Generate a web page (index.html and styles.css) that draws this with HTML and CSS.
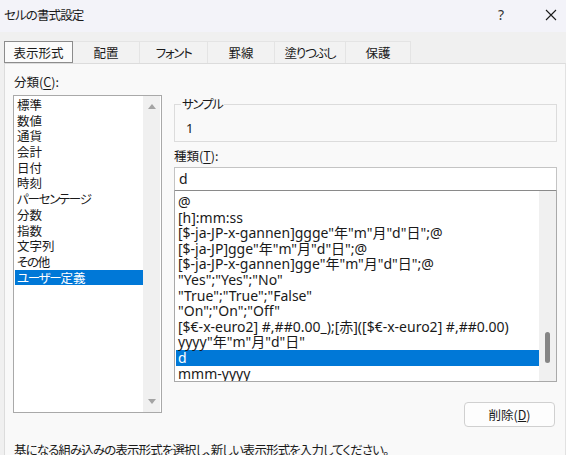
FILE: index.html
```html
<!DOCTYPE html>
<html lang="ja">
<head>
<meta charset="utf-8">
<title>セルの書式設定</title>
<link rel="stylesheet" href="styles.css">
</head>
<body>
<div class="window">
  <header class="titlebar">
    <span class="title">セルの書式設定</span>
    <div class="controls">
      <span class="help">?</span>
      <span class="close"><svg width="12" height="12" viewBox="0 0 12 12"><path d="M1 1L11 11M11 1L1 11" stroke="#1a1a1a" stroke-width="1.1" fill="none"/></svg></span>
    </div>
  </header>
  <nav class="tabs">
    <div class="tab active t1">表示形式</div>
    <div class="tab t2">配置</div>
    <div class="tab t3"><span class="kana">フォント</span></div>
    <div class="tab t4">罫線</div>
    <div class="tab t5"><span class="kana">塗りつぶし</span></div>
    <div class="tab t6">保護</div>
  </nav>
  <section class="panel">
    <div class="columns">
      <div class="left">
        <div class="label first">分類(<u>C</u>):</div>
        <div class="catlist">
          <ul class="cat-items">
            <li>標準</li>
            <li>数値</li>
            <li>通貨</li>
            <li>会計</li>
            <li>日付</li>
            <li>時刻</li>
            <li><span class="kana">パーセンテージ</span></li>
            <li>分数</li>
            <li>指数</li>
            <li>文字列</li>
            <li><span class="kana">その</span>他</li>
            <li class="sel"><span class="kana">ユーザー</span>定義</li>
          </ul>
          <div class="vscroll">
            <span class="arrow up"></span>
            <span class="arrow down"></span>
          </div>
        </div>
      </div>
      <div class="right">
        <fieldset class="sample">
          <legend><span class="kana">サンプル</span></legend>
          <div class="sample-value">1</div>
        </fieldset>
        <div class="label">種類(<u>T</u>):</div>
        <div class="input">d</div>
        <div class="fmtlist">
          <ul class="fmt-items">
            <li>@</li>
            <li>[h]:mm:ss</li>
            <li>[$-ja-JP-x-gannen]ggge"年"m"月"d"日";@</li>
            <li>[$-ja-JP]gge"年"m"月"d"日";@</li>
            <li>[$-ja-JP-x-gannen]gge"年"m"月"d"日";@</li>
            <li>"Yes";"Yes";"No"</li>
            <li>"True";"True";"False"</li>
            <li>"On";"On";"Off"</li>
            <li>[$€-x-euro2] #,##0.00_);[赤]([$€-x-euro2] #,##0.00)</li>
            <li>yyyy"年"m"月"d"日"</li>
            <li class="sel">d</li>
            <li>mmm-yyyy</li>
          </ul>
          <div class="vscroll2">
            <span class="thumb" style="margin-top:141px"></span>
          </div>
        </div>
        <div class="btnrow">
          <button class="btn">削除(<u>D</u>)</button>
        </div>
      </div>
    </div>
    <p class="hint">基になる組み込みの表示形式を選択し、新しい表示形式を入力してください。</p>
  </section>
</div>
</body>
</html>
```

FILE: styles.css
```css
* { box-sizing: border-box; }
html, body {
  margin: 0;
  padding: 0;
  width: 566px;
  height: 455px;
  overflow: hidden;
  background: #f0f0f0;
}
body {
  font-family: "Noto Sans CJK JP", "Noto Sans", sans-serif;
  font-feature-settings: "palt";
  color: #1a1a1a;
  font-size: 12px;
}
.window {
  width: 566px;
  height: 455px;
  overflow: hidden;
}
.kana { letter-spacing: -1.3px; }
.titlebar {
  height: 32px;
  background: #f3f3f9;
  display: flex;
  align-items: center;
  justify-content: space-between;
  padding-left: 4px;
  padding-bottom: 3px;
}
.title {
  font-size: 12.5px;
  line-height: 16px;
  letter-spacing: -0.9px;
}
.controls {
  display: flex;
  align-items: center;
  height: 100%;
}
.help {
  width: 30px;
  text-align: center;
  font-size: 14px;
  font-family: "Noto Sans", sans-serif;
  color: #333;
  margin-right: 20px;
}
.close {
  width: 30px;
  display: flex;
  justify-content: center;
  align-items: center;
}
.tabs {
  display: flex;
  padding: 9px 0 0 4px;
  height: 31px;
  background: #f0f0f0;
}
.tab {
  height: 22px;
  border: 1px solid #e4e4e4;
  border-bottom: none;
  border-left: none;
  background: #f2f2f2;
  text-align: center;
  line-height: 21px;
  font-size: 12.5px;
}
.tab.active {
  background: #fbfbfb;
  border: 1px solid #8c8c8c;
}
.t1 { width: 69px; }
.t2 { width: 67px; }
.t3 { width: 68px; }
.t4 { width: 67px; }
.t5 { width: 71px; }
.t6 { width: 65px; }

.panel {
  margin-left: 4px;
  width: 562px;
  height: 400px;
  border: 1px solid #dcdcdc;
  border-bottom: none;
  border-right-color: #e2e2e2;
  background: #f9f9f9;
  padding: 0 8px;
}
.columns {
  display: grid;
  grid-template-columns: 149px 383px;
  column-gap: 12px;
  align-items: start;
}
.label {
  line-height: 16px;
  font-size: 12.5px;
}
.label u { text-underline-offset: 2px; }
.left .label.first {
  margin-top: 10px;
  margin-bottom: 5px;
  padding-left: 1px;
}
.catlist {
  height: 318px;
  border: 1px solid #a9a9a9;
  background: #ffffff;
  display: flex;
}
.cat-items {
  list-style: none;
  margin: 0;
  padding: 1px 0 0 1px;
  width: 129px;
}
.cat-items li {
  height: 15.7px;
  line-height: 15.7px;
  padding-left: 2px;
  font-size: 12.5px;
  white-space: nowrap;
}
.sel {
  background: #0078d7;
  color: #ffffff;
}
.vscroll {
  width: 17px;
  background: #f0f0f0;
  display: flex;
  flex-direction: column;
  justify-content: space-between;
  align-items: center;
  padding: 8px 0 8px 0;
}
.arrow {
  width: 0;
  height: 0;
  border-left: 4px solid transparent;
  border-right: 4px solid transparent;
}
.arrow.up { border-bottom: 5px solid #a3a3a3; }
.arrow.down { border-top: 5px solid #a3a3a3; }

.right { display: flex; flex-direction: column; }
.sample {
  margin: 32px 0 0 0;
  border: 1px solid #dcdcdc;
  padding: 0 0 5px 6px;
  min-inline-size: 0;
}
.sample legend {
  padding: 0 1px;
  line-height: 16px;
  font-size: 12.5px;
}
.sample-value {
  margin: 8px 0 0 5px;
  line-height: 16px;
  font-family: "Noto Sans", sans-serif;
  font-size: 13px;
}
.right .label { margin-top: 6px; }
.input {
  margin-top: 3px;
  height: 24px;
  border: 1px solid #c4c4c4;
  border-bottom-color: #8a8a8a;
  background: #ffffff;
  padding-left: 4px;
  line-height: 21px;
  font-size: 14px;
  font-family: "Noto Sans", sans-serif;
}
.fmtlist {
  height: 191px;
  border: 1px solid #a9a9a9;
  border-top: none;
  background: #ffffff;
  display: flex;
  overflow: hidden;
}
.fmt-items {
  list-style: none;
  margin: 0;
  padding: 3px 0 0 1px;
  width: 364px;
  overflow: hidden;
}
.fmt-items li {
  height: 15.6px;
  line-height: 15.6px;
  padding-left: 2px;
  font-size: 14px;
  white-space: nowrap;
  font-family: "Noto Sans", "Noto Sans CJK JP", sans-serif;
  font-feature-settings: normal;
}
.vscroll2 {
  width: 17px;
  background: #f0f0f0;
  display: flex;
  flex-direction: column;
  align-items: center;
}
.thumb {
  width: 5px;
  height: 31px;
  border-radius: 3px;
  background: #858585;
}
.btnrow {
  display: flex;
  justify-content: flex-end;
  margin-top: 20px;
  padding-right: 2px;
}
.btn {
  width: 91px;
  height: 25px;
  border: 1px solid #d0d0d0;
  border-radius: 4px;
  background: #fdfdfd;
  font-family: inherit;
  font-feature-settings: "palt";
  font-size: 12.5px;
  color: #1a1a1a;
  padding: 0;
  line-height: 22px;
}
.hint {
  margin: 15px 0 0 1px;
  line-height: 16px;
  font-size: 12.5px;
  letter-spacing: -0.9px;
  white-space: nowrap;
}
```
